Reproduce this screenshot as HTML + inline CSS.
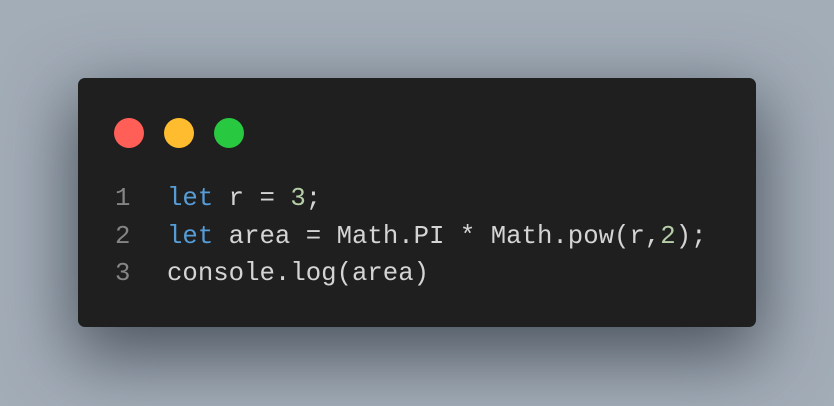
<!DOCTYPE html>
<html><head><style>
html,body{margin:0;width:834px;height:406px;overflow:hidden;background:#a3adb8;}
.card{position:absolute;left:78px;top:78px;width:678px;height:249px;background:#1f1f1f;border-radius:7px;box-shadow:0 24px 70px 6px rgba(40,48,58,0.7);}
.dot{position:absolute;top:40px;width:30px;height:30px;border-radius:50%;}
.code{position:absolute;left:0;top:102px;font-family:"Liberation Mono",monospace;font-size:25.7px;line-height:37.5px;color:#d4d4d4;white-space:pre;}
.ln{display:inline-block;width:89px;text-align:left;padding-left:37px;box-sizing:border-box;color:#858585;}
.k{color:#569cd6}.n{color:#b5cea8}
</style></head><body>
<div class="card">
<div class="dot" style="left:36px;background:#ff5f57"></div>
<div class="dot" style="left:86px;background:#febc2e"></div>
<div class="dot" style="left:136px;background:#28c840"></div>
<div class="code"><div><span class="ln">1</span><span class="k">let</span> r = <span class="n">3</span>;</div><div><span class="ln">2</span><span class="k">let</span> area = Math.PI * Math.pow(r,<span class="n">2</span>);</div><div><span class="ln">3</span>console.log(area)</div></div>
</div>
</body></html>
